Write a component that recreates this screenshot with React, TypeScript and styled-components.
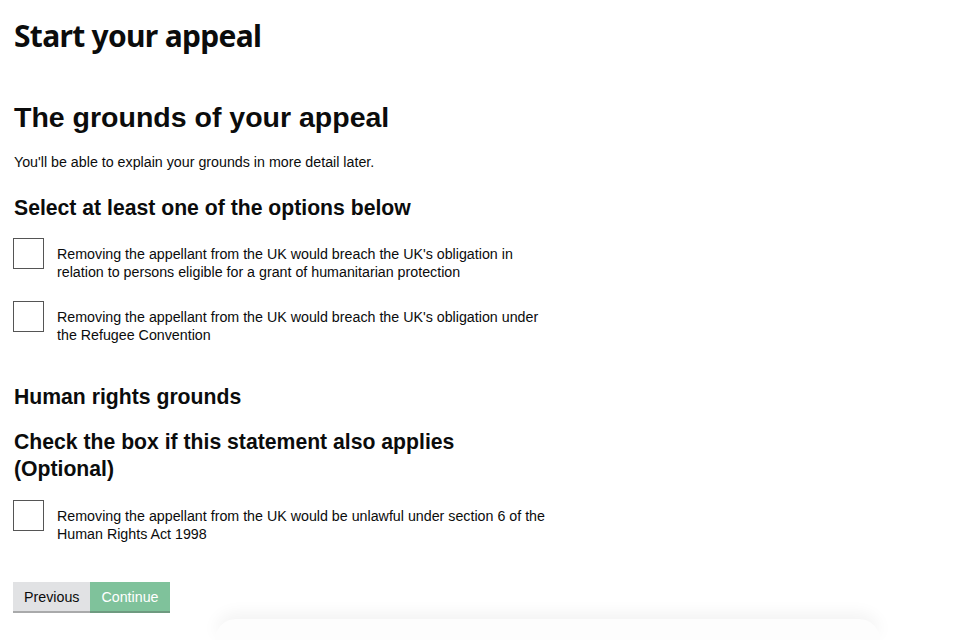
import styled, { createGlobalStyle } from "styled-components";

const GlobalStyle = createGlobalStyle`
  html, body {
    margin: 0;
    padding: 0;
    background: #ffffff;
  }
  body {
    font-family: "Liberation Sans", Arial, sans-serif;
    color: #0b0c0c;
  }
`;

const Page = styled.div`
  width: 960px;
  height: 640px;
  overflow: hidden;
  display: flex;
  flex-direction: column;
`;

const Main = styled.main`
  flex: 1;
  padding: 17px 14px 0 14px;
  width: 550px;
`;

const Title = styled.h1`
  margin: 0;
  font-family: "Noto Sans", sans-serif;
  font-weight: 700;
  font-size: 30px;
  letter-spacing: -0.7px;
  line-height: 38px;
`;

const Heading = styled.h2`
  margin: 44px 0 0 0;
  font-size: 28.5px;
  font-weight: 700;
  line-height: 36px;
`;

const Hint = styled.p`
  margin: 18px 0 0 0;
  font-size: 14.25px;
  line-height: 18px;
`;

const Legend = styled.h3<{ $gap: number }>`
  margin: ${(p) => p.$gap}px 0 0 0;
  font-size: 21.2px;
  font-weight: 700;
  line-height: 27px;
  max-width: 470px;
`;

const Options = styled.div<{ $gap: number }>`
  display: flex;
  flex-direction: column;
  gap: 20px;
  margin-top: ${(p) => p.$gap}px;
`;

const Option = styled.label`
  display: flex;
  align-items: flex-start;
  gap: 13px;
  cursor: pointer;
`;

const Box = styled.span`
  flex: none;
  width: 29px;
  height: 29px;
  border: 1.5px solid #555555;
  background: #fff;
  margin-left: -1px;
`;

const OptionText = styled.span`
  font-size: 14.25px;
  line-height: 18px;
  padding-top: 7px;
  max-width: 490px;
`;

const Buttons = styled.div`
  display: flex;
  margin-top: 39px;
  margin-left: -1px;
`;

const Button = styled.button<{ $primary?: boolean }>`
  font-family: "Liberation Sans", Arial, sans-serif;
  font-size: 14.25px;
  height: 31px;
  padding: 0 11px;
  border: 0;
  border-bottom: 2px solid ${(p) => (p.$primary ? "#6e9a80" : "#a9aaab")};
  background: ${(p) => (p.$primary ? "#7fc29b" : "#e1e2e4")};
  color: ${(p) => (p.$primary ? "#ffffff" : "#0b0c0c")};
  cursor: pointer;
`;

const Footer = styled.footer`
  height: 21px;
  margin: 0 80px 0 215px;
  border-radius: 30px 30px 0 0;
  background: #fdfdfd;
  box-shadow: 0 -6px 16px rgba(0, 0, 0, 0.05);
`;

const firstGroup = [
  "Removing the appellant from the UK would breach the UK's obligation in relation to persons eligible for a grant of humanitarian protection",
  "Removing the appellant from the UK would breach the UK's obligation under the Refugee Convention",
];

const secondGroup = [
  "Removing the appellant from the UK would be unlawful under section 6 of the Human Rights Act 1998",
];

export default function App() {
  return (
    <Page>
      <GlobalStyle />
      <Main>
        <Title>Start your appeal</Title>
        <Heading>The grounds of your appeal</Heading>
        <Hint>You'll be able to explain your grounds in more detail later.</Hint>
        <Legend $gap={23}>Select at least one of the options below</Legend>
        <Options $gap={17}>
          {firstGroup.map((text) => (
            <Option key={text}>
              <Box />
              <OptionText>{text}</OptionText>
            </Option>
          ))}
        </Options>
        <Legend $gap={39}>Human rights grounds</Legend>
        <Legend $gap={18}>Check the box if this statement also applies (Optional)</Legend>
        <Options $gap={18}>
          {secondGroup.map((text) => (
            <Option key={text}>
              <Box />
              <OptionText>{text}</OptionText>
            </Option>
          ))}
        </Options>
        <Buttons>
          <Button>Previous</Button>
          <Button $primary>Continue</Button>
        </Buttons>
      </Main>
      <Footer />
    </Page>
  );
}
